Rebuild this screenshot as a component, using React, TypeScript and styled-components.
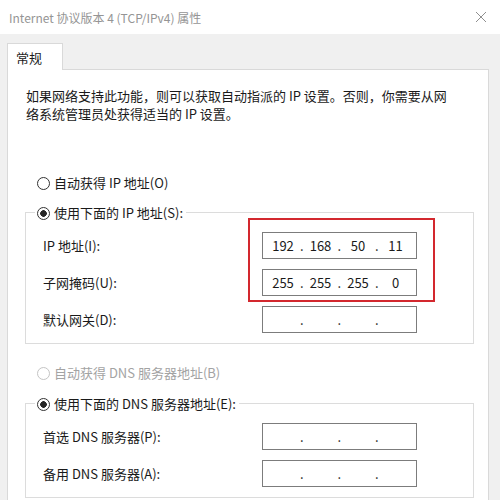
import styled, { createGlobalStyle } from "styled-components";

const GlobalStyle = createGlobalStyle`
    html, body {
        margin: 0;
        padding: 0;
    }
    body {
        width: 500px;
        height: 500px;
        overflow: hidden;
        font-family: "Noto Sans CJK SC", "Noto Sans", sans-serif;
        font-size: 13px;
        color: #1a1a1a;
    }
`;

const Window = styled.div`
    width: 500px;
    height: 500px;
    display: flex;
    flex-direction: column;
    background-color: #f0f0f0;
    overflow: hidden;
`;

const TitleBar = styled.div`
    height: 34px;
    flex-shrink: 0;
    background-color: #ffffff;
    display: flex;
    align-items: center;
    justify-content: space-between;
    padding: 0 13px 0 9px;
`;

const TitleText = styled.span`
    font-size: 12px;
    color: #959595;
`;

const DialogBody = styled.div`
    flex: 1;
    display: flex;
    flex-direction: column;
    padding: 9px 11px 0 7px;
`;

const TabRow = styled.div`
    display: flex;
`;

const Tab = styled.div`
    position: relative;
    z-index: 1;
    width: 56px;
    height: 27px;
    box-sizing: border-box;
    margin-bottom: -1px;
    padding-left: 8px;
    display: flex;
    align-items: center;
    background-color: #ffffff;
    border: 1px solid #d9d9d9;
    border-bottom: none;
    color: #1a1a1a;
`;

const Panel = styled.div`
    flex: 1;
    background-color: #ffffff;
    border: 1px solid #d9d9d9;
    border-bottom: none;
    padding: 17px 15px 0 17px;
`;

const Intro = styled.p`
    margin: 0 0 0 1px;
    line-height: 18px;
    white-space: nowrap;
`;

const RadioRow = styled.div<{ $top: number }>`
    height: 18px;
    margin-top: ${(p) => p.$top}px;
    padding-left: 12px;
    display: flex;
    align-items: center;
    gap: 4px;
`;

const RadioCircle = styled.span<{ $checked?: boolean; $disabled?: boolean }>`
    width: 13px;
    height: 13px;
    box-sizing: border-box;
    border-radius: 50%;
    border: 1px solid ${(p) => (p.$disabled ? "#c4c4c4" : "#333333")};
    background: ${(p) =>
        p.$checked
            ? "radial-gradient(circle, #262626 0 3px, #ffffff 3.6px)"
            : "#ffffff"};
    flex-shrink: 0;
`;

const RadioText = styled.span<{ $disabled?: boolean }>`
    color: ${(p) => (p.$disabled ? "#a3a3a3" : "#1a1a1a")};
    line-height: 18px;
`;

const GroupBox = styled.div<{ $top: number }>`
    position: relative;
    width: 449px;
    box-sizing: border-box;
    margin-top: ${(p) => p.$top}px;
    border: 1px solid #dcdcdc;
    padding-bottom: 10px;
`;

const GroupTitle = styled.div`
    width: fit-content;
    height: 20px;
    margin: -10px 0 0 9px;
    padding: 0 3px 0 2px;
    background-color: #ffffff;
    display: flex;
    align-items: center;
    gap: 4px;
`;

const FieldList = styled.div`
    margin-top: 9px;
    padding-left: 17px;
    display: flex;
    flex-direction: column;
    gap: 10px;
`;

const FieldRow = styled.div`
    display: flex;
    align-items: center;
`;

const FieldLabel = styled.span`
    width: 219px;
    flex-shrink: 0;
`;

const IpBox = styled.div`
    width: 155px;
    height: 27px;
    box-sizing: border-box;
    border: 1px solid #7c7c7c;
    padding: 0 0 1px 6px;
    display: grid;
    grid-template-columns: 28px 9.5px 28px 9.5px 28px 9.5px 28px;
    align-items: center;
    background-color: #ffffff;
`;

const IpPart = styled.span`
    text-align: center;
    font-size: 13px;
    color: #1a1a1a;
`;

const IpDot = styled.span`
    text-align: center;
    font-size: 13px;
    color: #1a1a1a;
`;

const Highlight = styled.div`
    position: absolute;
    left: 222px;
    top: 5px;
    width: 187px;
    height: 84px;
    box-sizing: border-box;
    border: 2px solid #d3282e;
    pointer-events: none;
`;

function CloseIcon() {
    return (
        <svg width="12" height="12" viewBox="0 0 12 12">
            <path d="M1 1 L11 11 M11 1 L1 11" stroke="#8f8f8f" strokeWidth="1" fill="none" />
        </svg>
    );
}

function IpField(props: { parts?: string[] }) {
    const parts = props.parts || ["", "", "", ""];
    return (
        <IpBox>
            <IpPart>{parts[0]}</IpPart>
            <IpDot>.</IpDot>
            <IpPart>{parts[1]}</IpPart>
            <IpDot>.</IpDot>
            <IpPart>{parts[2]}</IpPart>
            <IpDot>.</IpDot>
            <IpPart>{parts[3]}</IpPart>
        </IpBox>
    );
}

export default function App() {
    return (
        <>
            <GlobalStyle />
            <Window>
                <TitleBar>
                    <TitleText>Internet 协议版本 4 (TCP/IPv4) 属性</TitleText>
                    <CloseIcon />
                </TitleBar>
                <DialogBody>
                    <TabRow>
                        <Tab>常规</Tab>
                    </TabRow>
                    <Panel>
                        <Intro>
                            如果网络支持此功能，则可以获取自动指派的 IP 设置。否则，你需要从网
                            <br />
                            络系统管理员处获得适当的 IP 设置。
                        </Intro>

                        <RadioRow $top={51}>
                            <RadioCircle />
                            <RadioText>自动获得 IP 地址(O)</RadioText>
                        </RadioRow>

                        <GroupBox $top={20}>
                            <GroupTitle>
                                <RadioCircle $checked />
                                <RadioText>使用下面的 IP 地址(S):</RadioText>
                            </GroupTitle>
                            <FieldList>
                                <FieldRow>
                                    <FieldLabel>IP 地址(I):</FieldLabel>
                                    <IpField parts={["192", "168", "50", "11"]} />
                                </FieldRow>
                                <FieldRow>
                                    <FieldLabel>子网掩码(U):</FieldLabel>
                                    <IpField parts={["255", "255", "255", "0"]} />
                                </FieldRow>
                                <FieldRow>
                                    <FieldLabel>默认网关(D):</FieldLabel>
                                    <IpField />
                                </FieldRow>
                            </FieldList>
                            <Highlight />
                        </GroupBox>

                        <RadioRow $top={20}>
                            <RadioCircle $disabled />
                            <RadioText $disabled>自动获得 DNS 服务器地址(B)</RadioText>
                        </RadioRow>

                        <GroupBox $top={21}>
                            <GroupTitle>
                                <RadioCircle $checked />
                                <RadioText>使用下面的 DNS 服务器地址(E):</RadioText>
                            </GroupTitle>
                            <FieldList>
                                <FieldRow>
                                    <FieldLabel>首选 DNS 服务器(P):</FieldLabel>
                                    <IpField />
                                </FieldRow>
                                <FieldRow>
                                    <FieldLabel>备用 DNS 服务器(A):</FieldLabel>
                                    <IpField />
                                </FieldRow>
                            </FieldList>
                        </GroupBox>
                    </Panel>
                </DialogBody>
            </Window>
        </>
    );
}
